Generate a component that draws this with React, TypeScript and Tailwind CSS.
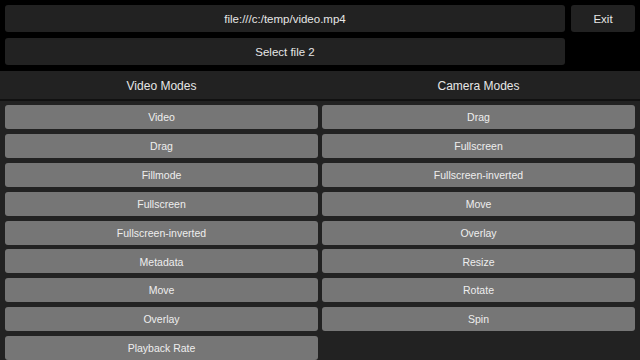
const videoModes = [
  "Video",
  "Drag",
  "Fillmode",
  "Fullscreen",
  "Fullscreen-inverted",
  "Metadata",
  "Move",
  "Overlay",
  "Playback Rate",
];

const cameraModes = [
  "Drag",
  "Fullscreen",
  "Fullscreen-inverted",
  "Move",
  "Overlay",
  "Resize",
  "Rotate",
  "Spin",
];

const ModeList = ({ items }: { items: string[] }) => {
  return (
    <div className="flex flex-col gap-[4.875px]">
      {items.map((item) => (
        <button
          key={item}
          className="h-[24px] w-full rounded-[3px] bg-[#767676] pt-[2px] text-[10.5px] text-[#eeeeee] outline-none"
        >
          {item}
        </button>
      ))}
    </div>
  );
};

const App = () => {
  return (
    <div
      className="w-[640px] h-[360px] overflow-hidden bg-black flex flex-col"
      style={{ fontFamily: '"Liberation Sans", Arial, sans-serif' }}
    >
      <div className="grid grid-cols-[560px_64px] gap-x-[6px] gap-y-[6px] px-[5px] pt-[5px]">
        <button className="h-[27px] rounded-[3px] bg-[#222222] pt-[2px] text-[11.5px] text-[#e6e6e6]">
          file:///c:/temp/video.mp4
        </button>
        <button className="h-[27px] rounded-[3px] bg-[#222222] pt-[2px] text-[11.5px] text-[#e6e6e6]">
          Exit
        </button>
        <button className="h-[27px] rounded-[3px] bg-[#222222] pt-[2px] text-[11.5px] text-[#e6e6e6]">
          Select file 2
        </button>
      </div>
      <div className="mt-[6px] flex-1 bg-[#222222]">
        <div className="grid grid-cols-2 gap-x-[4px] px-[5px] pt-[2px] h-[30px] items-center border-b-2 border-[#111111] text-[12px] text-[#e6e6e6]">
          <div className="text-center">Video Modes</div>
          <div className="text-center">Camera Modes</div>
        </div>
        <div className="grid grid-cols-2 gap-x-[4px] px-[5px] pt-[4px] items-start">
          <ModeList items={videoModes} />
          <ModeList items={cameraModes} />
        </div>
      </div>
    </div>
  );
};

export default App;
